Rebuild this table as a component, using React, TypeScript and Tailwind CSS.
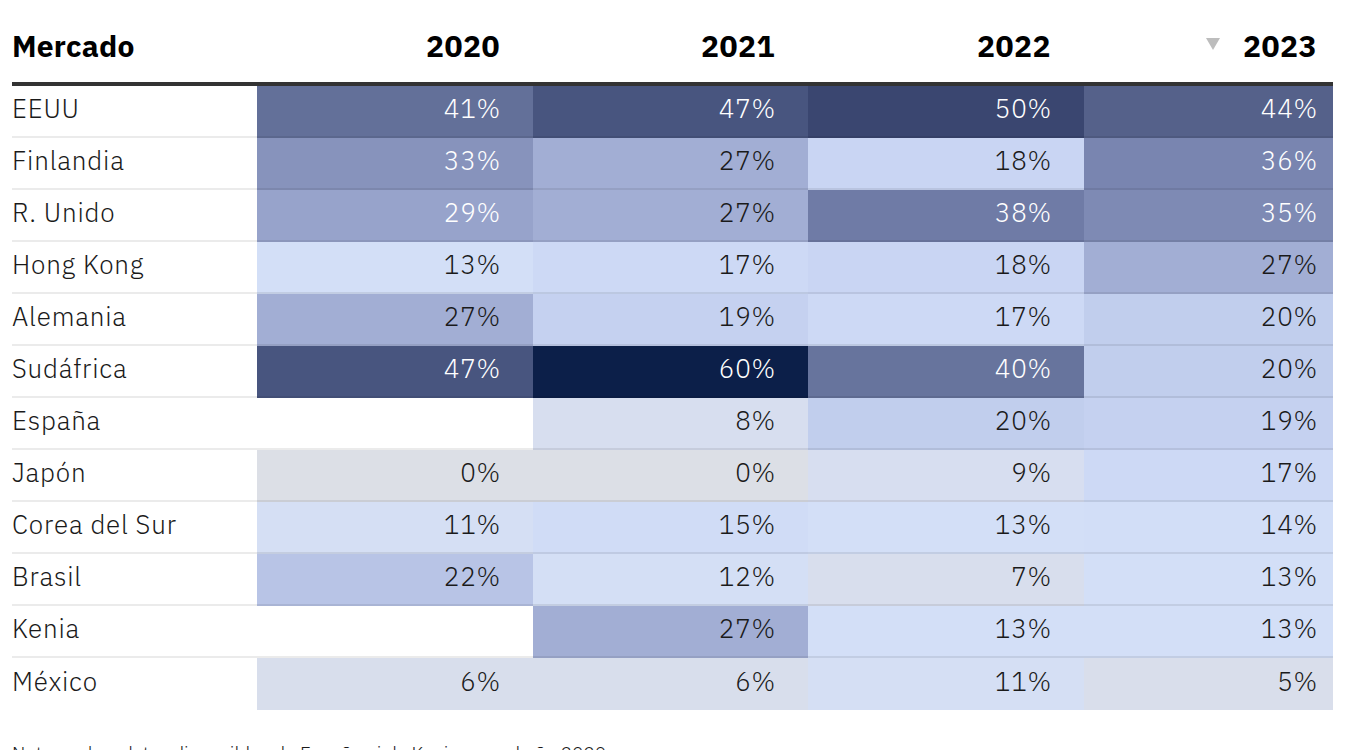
import React from 'react';

type Row = { name: string; values: (number | null)[] };

const rows: Row[] = [
  { name: 'EEUU', values: [41, 47, 50, 44] },
  { name: 'Finlandia', values: [33, 27, 18, 36] },
  { name: 'R. Unido', values: [29, 27, 38, 35] },
  { name: 'Hong Kong', values: [13, 17, 18, 27] },
  { name: 'Alemania', values: [27, 19, 17, 20] },
  { name: 'Sudáfrica', values: [47, 60, 40, 20] },
  { name: 'España', values: [null, 8, 20, 19] },
  { name: 'Japón', values: [0, 0, 9, 17] },
  { name: 'Corea del Sur', values: [11, 15, 13, 14] },
  { name: 'Brasil', values: [22, 12, 7, 13] },
  { name: 'Kenia', values: [null, 27, 13, 13] },
  { name: 'México', values: [6, 6, 11, 5] },
];

const years = ['2020', '2021', '2022', '2023'];

// colour scale: grey at 0, light blue mid, navy at the top
const stops: [number, number[]][] = [
  [0, [220, 223, 230]],
  [6, [216, 222, 236]],
  [9, [215, 222, 240]],
  [13, [211, 223, 247]],
  [17, [205, 217, 245]],
  [19, [197, 209, 240]],
  [20, [193, 206, 237]],
  [22, [184, 196, 230]],
  [27, [162, 174, 212]],
  [29, [151, 163, 203]],
  [33, [135, 147, 188]],
  [36, [121, 133, 176]],
  [38, [111, 123, 166]],
  [41, [99, 112, 153]],
  [44, [85, 97, 138]],
  [47, [72, 85, 127]],
  [50, [58, 70, 112]],
  [60, [12, 31, 73]],
];

function cellColor(v: number) {
  for (let i = 0; i < stops.length - 1; i++) {
    const [a, ca] = stops[i];
    const [b, cb] = stops[i + 1];
    if (v >= a && v <= b) {
      const t = (v - a) / (b - a);
      const c = ca.map((x, k) => Math.round(x + (cb[k] - x) * t));
      return `rgb(${c[0]}, ${c[1]}, ${c[2]})`;
    }
  }
  return 'rgb(12, 31, 73)';
}

const grid = 'grid grid-cols-[245px_276px_275px_276px_249px]';

export default function App() {
  return (
    <div
      className="min-h-screen bg-white pl-3 pr-[13px] text-[#1a1a1a]"
      style={{ fontFamily: '"IBM Plex Sans", "Open Sans", "Noto Sans", sans-serif' }}
    >
      {/* header */}
      <div className={`${grid} h-[86px] items-end border-b-4 border-[#333] pb-[18px] text-[30px] font-bold leading-9 text-black`}>
        <div className="tracking-[0.2px]">Mercado</div>
        {years.map((y, i) => (
          <div
            key={y}
            className={`flex items-center justify-end gap-[23px] ${i === 3 ? 'pr-[16px]' : 'pr-[33px]'}`}
          >
            {i === 3 && (
              <svg width="14" height="12" viewBox="0 0 14 12" className="mt-[-4px]">
                <polygon points="0,0 14,0 7,12" fill="#bdbdbd" />
              </svg>
            )}
            <span className="tracking-[0.5px]">{y}</span>
          </div>
        ))}
      </div>

      {/* body */}
      {rows.map((r, ri) => {
        const last = ri === rows.length - 1;
        const border = last ? '' : 'border-b-2 border-black/[0.08]';
        return (
          <div key={r.name} className={`${grid} text-[26px] font-light tracking-[0.8px]`}>
            <div className={`flex h-[52px] items-center pb-[6px] ${border}`}>{r.name}</div>
            {r.values.map((v, i) => (
              <div
                key={i}
                className={`flex h-[52px] items-center justify-end pb-[6px] ${border} ${i === 3 ? 'pr-[15px]' : 'pr-[32px]'} ${
                  v !== null && v >= 28 ? 'text-white' : ''
                }`}
                style={{ backgroundColor: v === null ? '#ffffff' : cellColor(v) }}
              >
                {v !== null ? `${v}%` : ''}
              </div>
            ))}
          </div>
        );
      })}

      <p className="mt-[29px] text-[19px] font-light">
        Nota: no hay datos disponibles de España ni de Kenia para el año 2020.
      </p>
    </div>
  );
}
